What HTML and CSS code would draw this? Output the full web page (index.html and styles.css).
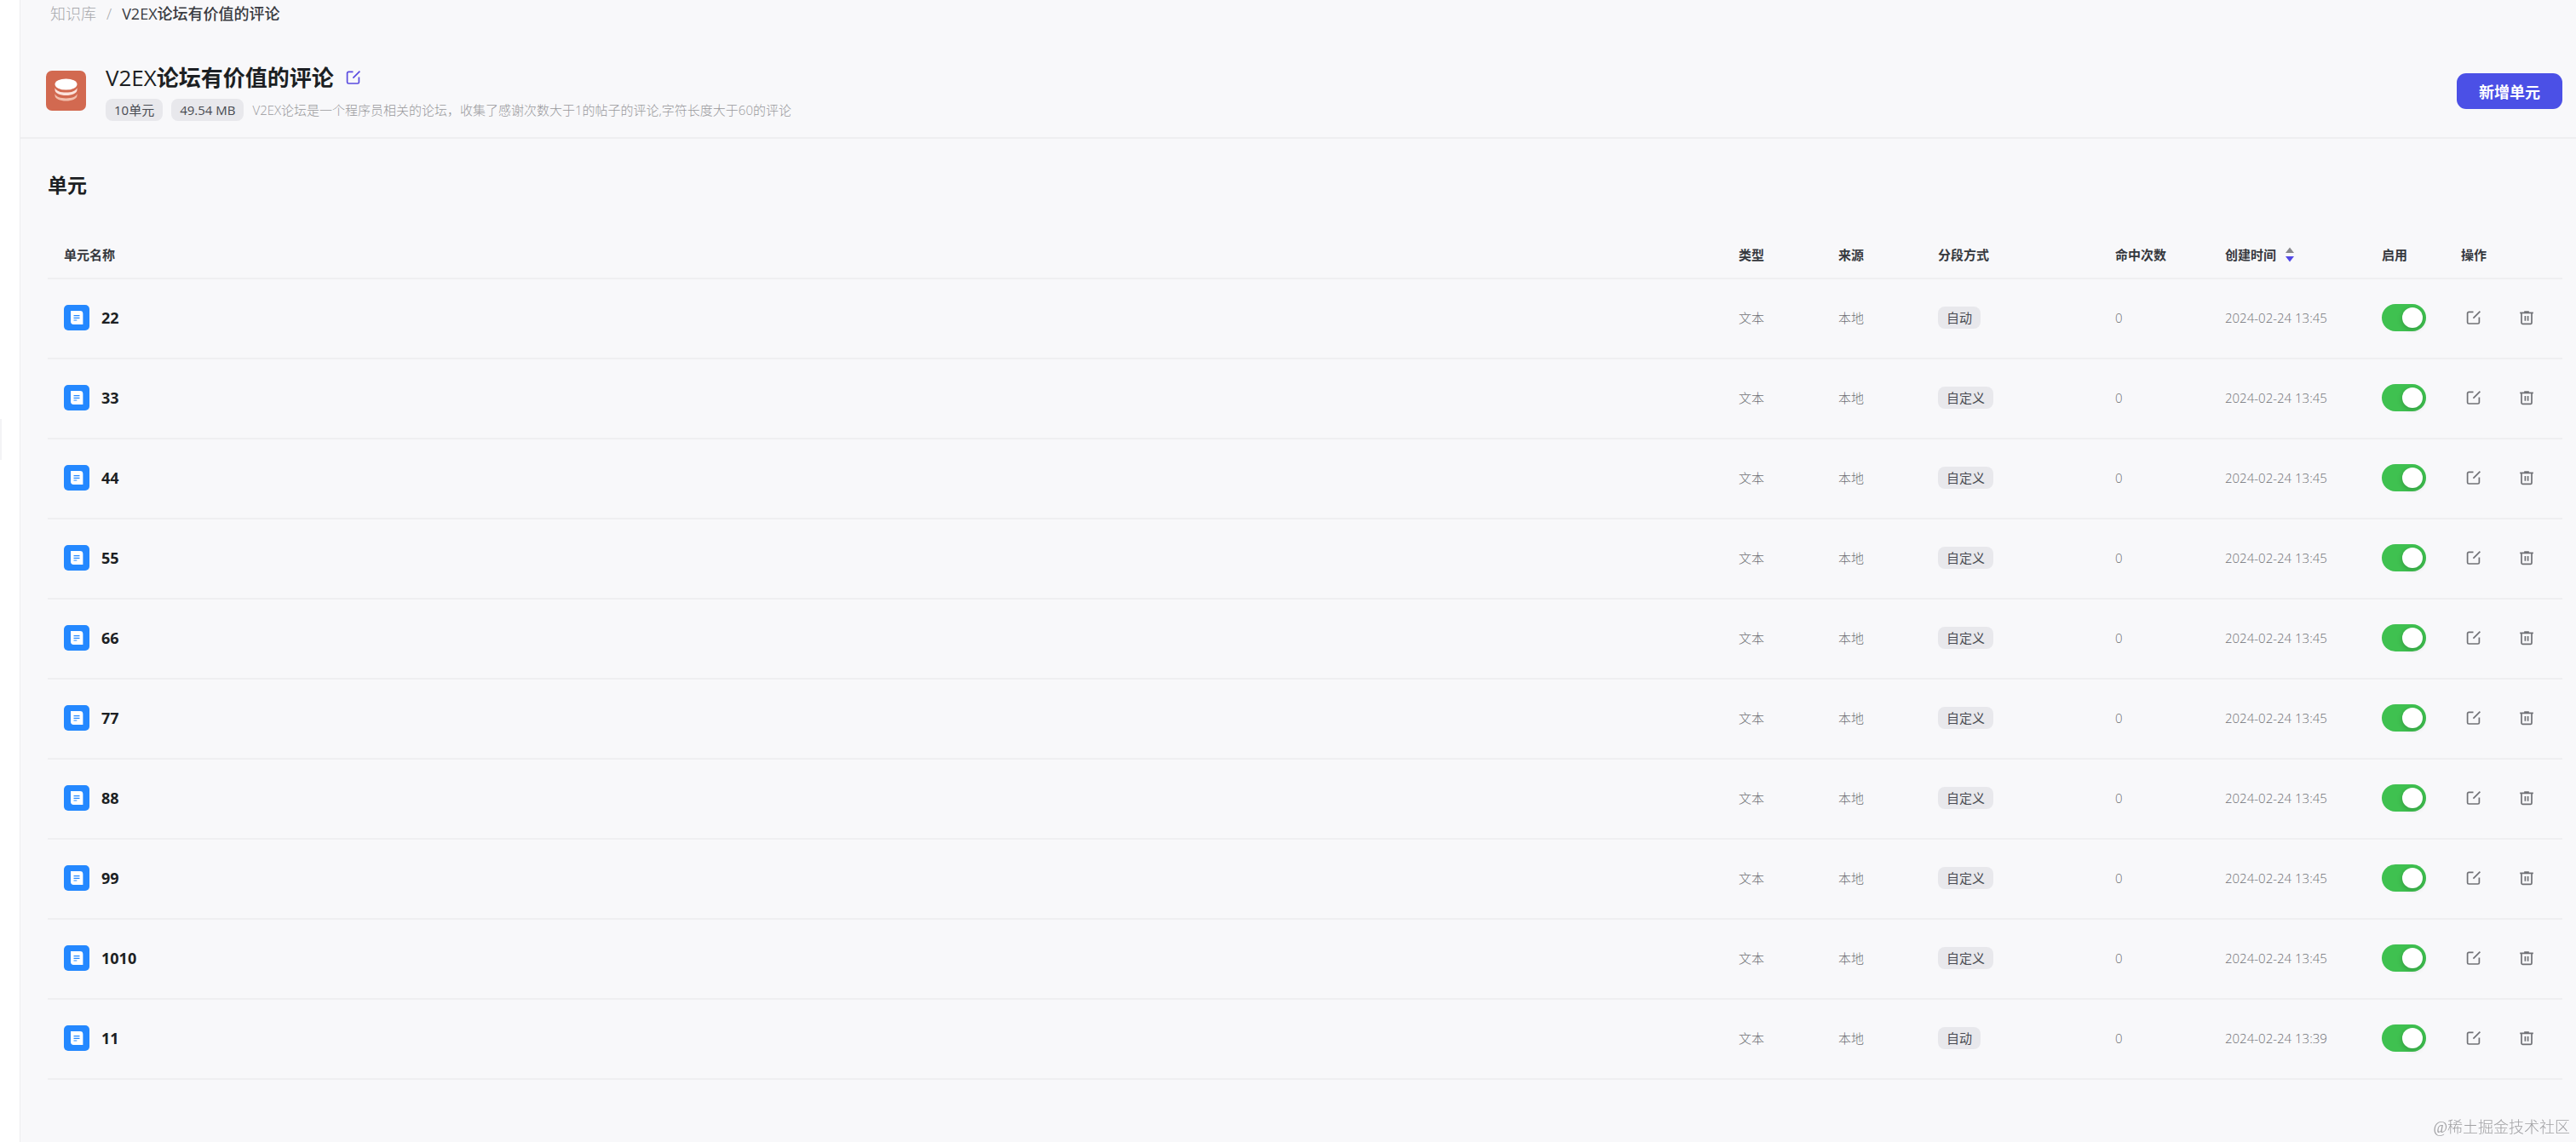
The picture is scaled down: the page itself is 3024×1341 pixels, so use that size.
FILE: index.html
```html
<!DOCTYPE html>
<html lang="zh-CN">
<head>
    <meta charset="UTF-8">
    <meta name="viewport" content="width=device-width, initial-scale=1.0">
    <title>V2EX论坛有价值的评论</title>
    <link rel="stylesheet" href="styles.css">
</head>
<body>

    <!-- Shared icons -->
    <svg class="icon-defs" aria-hidden="true">
        <symbol id="icon-edit" viewBox="0 0 18 18">
            <path d="M8.500 2.400H3.200a1.600 1.600 0 0 0-1.600 1.600v10.400A1.600 1.600 0 0 0 3.200 16h10.600a1.600 1.600 0 0 0 1.600-1.600V8.400M16.400 1.600L8.400 9.600" fill="none" stroke="currentColor" stroke-width="1.700"/>
        </symbol>
        <symbol id="icon-trash" viewBox="0 0 18 18">
            <path d="M1.200 3.400h15.600M6.200 2h5.600M3 4v11a1.400 1.400 0 0 0 1.400 1.400h9.200A1.400 1.400 0 0 0 15 15V4M7.400 7v5.800M10.600 7v5.800" fill="none" stroke="currentColor" stroke-width="1.700"/>
        </symbol>
        <symbol id="icon-doc" viewBox="0 0 30 30">
            <path d="M8 7h11a3.400 3.400 0 0 1 3.400 3.400V23H11.400a3.400 3.400 0 0 1-3.400-3.400z" fill="#fff"/>
            <path d="M11.500 12.600h7M11.500 15.400h7M11.500 18h3.800" fill="none" stroke="#2488ff" stroke-width="1.200"/>
        </symbol>
    </svg>

    <aside class="sidebar">
        <span class="sidebar-handle"></span>
    </aside>

    <main class="content">
        <nav class="breadcrumb">
            <a href="#">知识库</a>
            <span class="separator">/</span>
            <span class="current">V2EX<b>论坛有价值的评论</b></span>
        </nav>

        <header class="header">
            <svg class="logo" viewBox="0 0 47 47" aria-hidden="true">
                <rect width="47" height="47" rx="7" fill="#d26950"/>
                <ellipse cx="23.500" cy="16" rx="13" ry="6.600" fill="#fff"/>
                <path d="M10.500 20c1.500 4 6.500 5.600 13 5.600S35 24 36.500 20v2.500c0 4-5.800 6.500-13 6.500s-13-2.500-13-6.500z" fill="#fbe3dc"/>
                <path d="M10.500 27c1.500 4 6.500 5.400 13 5.400S35 31 36.500 27v2c0 4-5.800 6.500-13 6.500s-13-2.500-13-6.500z" fill="#f2bfad"/>
            </svg>
            <div class="header-info">
                <div class="title-row">
                    <h1>V2EX<b>论坛有价值的评论</b></h1>
                    <button class="icon-btn edit-title" aria-label="编辑"><svg><use href="#icon-edit"/></svg></button>
                </div>
                <div class="meta-row">
                    <span class="tag">10单元</span>
                    <span class="tag">49.54 MB</span>
                    <p>V2EX论坛是一个程序员相关的论坛，收集了感谢次数大于1的帖子的评论,字符长度大于60的评论</p>
                </div>
            </div>
            <button class="add-btn">新增单元</button>
        </header>

        <section class="units">
            <h2>单元</h2>
            <table>
                <thead>
                    <tr>
                        <th>单元名称</th>
                        <th class="col-type">类型</th>
                        <th class="col-source">来源</th>
                        <th class="col-split">分段方式</th>
                        <th class="col-hits">命中次数</th>
                        <th class="col-date">
                            <span class="sortable">创建时间
                                <svg class="sort" viewBox="0 0 10 18" aria-hidden="true">
                                    <path d="M5 0.500L10 7H0z" fill="#88888d"/>
                                    <path d="M5 17.500L10 11H0z" fill="#5248e6"/>
                                </svg>
                            </span>
                        </th>
                        <th class="col-enabled">启用</th>
                        <th class="col-actions">操作</th>
                    </tr>
                </thead>
                <tbody id="unitList">
                    <!-- Rows are injected by script.js -->
                </tbody>
            </table>
        </section>
    </main>

    <div class="watermark">@稀土掘金技术社区</div>

    <script src="script.js"></script>
</body>
</html>
```

FILE: styles.css
```css
* {
    box-sizing: border-box;
}

body {
    font-family: "Open Sans", "Noto Sans CJK SC", sans-serif;
    font-size: 15px;
    line-height: 24px;
    display: flex;
    min-height: 100vh;
    margin: 0;
    background-color: #f8f8fa;
    color: #1c1f23;
}

button {
    font-family: inherit;
    border: none;
    padding: 0;
    cursor: pointer;
}

h1,
h2,
p {
    margin: 0;
}

.icon-defs {
    display: none;
}

/* Collapsed sidebar */
.sidebar {
    width: 24px;
    flex: none;
    display: flex;
    align-items: center;
    background-color: white;
    border-right: 1px solid #ececef;
}

.sidebar-handle {
    width: 2px;
    height: 48px;
    margin-bottom: 310px;
    background-color: #f3f3f5;
}

.content {
    flex: 1;
    min-width: 0;
}

.breadcrumb {
    display: flex;
    gap: 12px;
    padding: 4px 35px;
    font-size: 18px;
}

.breadcrumb a,
.separator {
    color: #a6a7aa;
    font-weight: 300;
    text-decoration: none;
}

.current {
    color: #3a3c42;
}

.current b {
    font-weight: 500;
}

/* Knowledge base header */
.header {
    display: flex;
    align-items: center;
    height: 131px;
    padding: 20px 16px 0 30px;
    border-bottom: 2px solid #eeeef0;
}

.logo {
    width: 47px;
    height: 47px;
    margin-right: 23px;
}

.header-info {
    flex: 1;
}

.title-row {
    display: flex;
    align-items: center;
    gap: 14px;
    height: 38px;
}

h1 {
    font-size: 26px;
    font-weight: 400;
}

.meta-row {
    display: flex;
    align-items: center;
    gap: 10px;
    margin-top: 6px;
}

.meta-row p {
    color: #98999c;
    font-weight: 300;
}

.tag {
    display: inline-block;
    height: 26px;
    line-height: 26px;
    padding: 0 10px;
    border-radius: 8px;
    background-color: #e8e8ec;
    color: #494b52;
    font-weight: 400;
}

.add-btn {
    width: 124px;
    height: 42px;
    border-radius: 11px;
    background-color: #4b50e6;
    color: white;
    font-size: 18px;
    font-weight: 700;
}

/* Units table */
.units {
    padding: 38px 16px 60px 32px;
}

h2 {
    font-size: 23px;
    font-weight: 700;
    line-height: 32px;
}

table {
    width: 100%;
    margin-top: 38px;
    border-collapse: separate;
    border-spacing: 0;
    table-layout: fixed;
}

th,
td {
    padding: 0 0 0 19px;
    border-bottom: 2px solid #efeff1;
    text-align: left;
}

th {
    height: 57px;
    color: #36383e;
    font-weight: 600;
}

td {
    height: 94px;
    padding-bottom: 2px;
    color: #6f7075;
    font-weight: 300;
}

.col-type,
.col-source {
    width: 117px;
}

.col-split {
    width: 208px;
}

.col-hits {
    width: 129px;
}

.col-date {
    width: 184px;
}

.col-enabled {
    width: 93px;
}

.col-actions {
    width: 138px;
}

.sortable {
    display: flex;
    align-items: center;
    gap: 11px;
}

.sort {
    width: 10px;
    height: 18px;
}

.unit-name {
    display: flex;
    align-items: center;
    gap: 14px;
    color: #1c1f23;
    font-size: 18px;
    font-weight: 700;
}

.unit-icon {
    width: 30px;
    height: 30px;
    border-radius: 5px;
    background-color: #2488ff;
}

/* Toggle switch */
.switch {
    display: block;
    appearance: none;
    width: 52px;
    height: 32px;
    margin: 0;
    padding: 4px;
    border-radius: 16px;
    background-color: #3fc150;
    cursor: pointer;
}

.switch::before {
    content: "";
    display: block;
    width: 24px;
    height: 24px;
    border-radius: 50%;
    background-color: white;
    box-shadow: 0 2px 6px rgba(0, 0, 0, 0.2);
}

.switch:checked::before {
    margin-left: auto;
}

.switch:not(:checked) {
    background-color: #d5d6d9;
}

.actions {
    display: flex;
    gap: 44px;
    padding-left: 6px;
}

.icon-btn {
    display: flex;
    background: none;
    color: #707176;
}

.icon-btn svg {
    width: 18px;
    height: 18px;
}

.edit-title {
    color: #5a4be0;
}

.watermark {
    position: fixed;
    right: 7px;
    bottom: 5px;
    color: #a0a0a3;
    font-family: "Liberation Serif", "Noto Sans CJK SC", serif;
    font-size: 18px;
    font-weight: 300;
}
```

FILE: script.js
```js
const units = [
    { name: "22", split: "自动", date: "2024-02-24 13:45" },
    { name: "33", split: "自定义", date: "2024-02-24 13:45" },
    { name: "44", split: "自定义", date: "2024-02-24 13:45" },
    { name: "55", split: "自定义", date: "2024-02-24 13:45" },
    { name: "66", split: "自定义", date: "2024-02-24 13:45" },
    { name: "77", split: "自定义", date: "2024-02-24 13:45" },
    { name: "88", split: "自定义", date: "2024-02-24 13:45" },
    { name: "99", split: "自定义", date: "2024-02-24 13:45" },
    { name: "1010", split: "自定义", date: "2024-02-24 13:45" },
    { name: "11", split: "自动", date: "2024-02-24 13:39" }
];

// Render one table row per unit
document.getElementById("unitList").innerHTML = units.map(unit => `
    <tr>
        <td>
            <div class="unit-name">
                <svg class="unit-icon"><use href="#icon-doc"/></svg>
                ${unit.name}
            </div>
        </td>
        <td>文本</td>
        <td>本地</td>
        <td><span class="tag">${unit.split}</span></td>
        <td>0</td>
        <td>${unit.date}</td>
        <td><input class="switch" type="checkbox" aria-label="启用 ${unit.name}" checked></td>
        <td>
            <div class="actions">
                <button class="icon-btn" aria-label="编辑 ${unit.name}"><svg><use href="#icon-edit"/></svg></button>
                <button class="icon-btn" aria-label="删除 ${unit.name}"><svg><use href="#icon-trash"/></svg></button>
            </div>
        </td>
    </tr>
`).join("");
```
